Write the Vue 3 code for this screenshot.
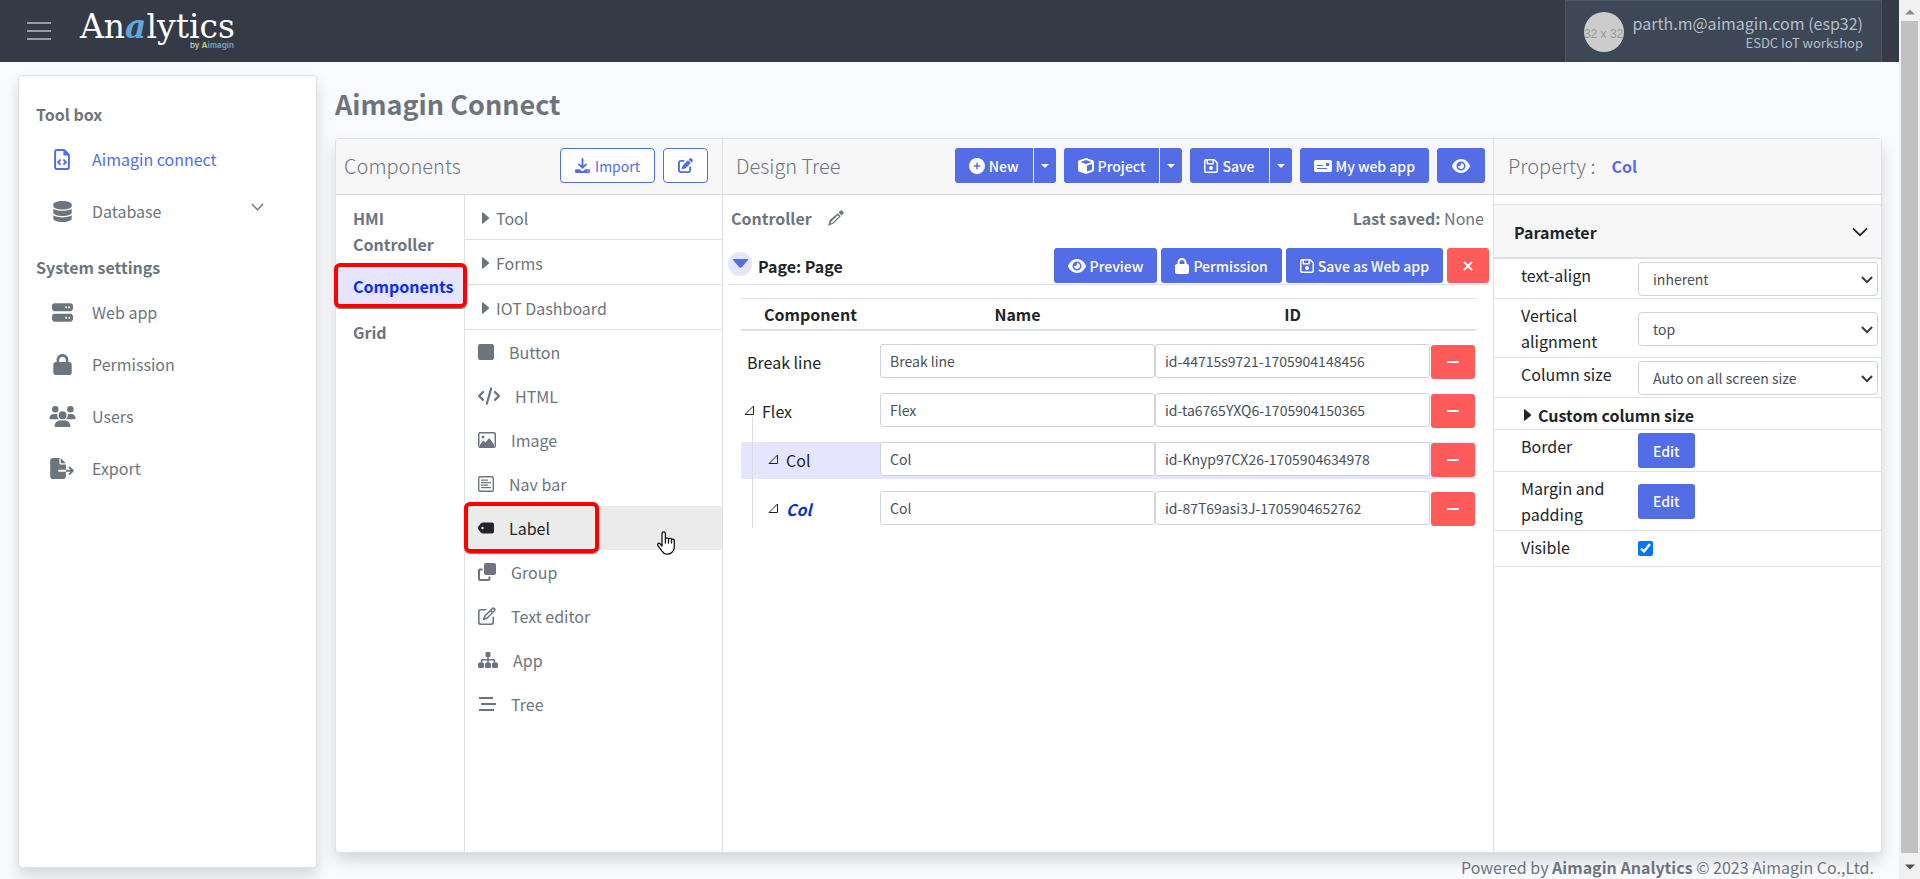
<script setup>
import { ref, h } from 'vue'

const pen = 'M471.6 21.7c-21.9-21.9-57.3-21.9-79.2 0L362.3 51.7l97.9 97.9 30.1-30.1c21.9-21.9 21.9-57.3 0-79.2L471.6 21.7zm-299.2 220c-6.1 6.1-10.8 13.6-13.5 21.9l-29.6 88.8c-2.9 8.6-.6 18.1 5.8 24.6s15.9 8.7 24.6 5.8l88.8-29.6c8.2-2.7 15.7-7.4 21.9-13.5L437.7 172.3 339.7 74.3 172.4 241.7z'

const icons = {
  fileCode: [384, 512, 'M64 464c-8.8 0-16-7.2-16-16V64c0-8.8 7.2-16 16-16H224v80c0 17.7 14.3 32 32 32h80V448c0 8.8-7.2 16-16 16H64zM64 0C28.7 0 0 28.7 0 64V448c0 35.3 28.7 64 64 64H320c35.3 0 64-28.7 64-64V154.5c0-17-6.7-33.3-18.7-45.3L274.7 18.7C262.7 6.7 246.5 0 229.5 0H64zm97 289c9.4-9.4 9.4-24.6 0-33.9s-24.6-9.4-33.9 0L79 303c-9.4 9.4-9.4 24.6 0 33.9l48 48c9.4 9.4 24.6 9.4 33.9 0s9.4-24.6 0-33.9l-31-31 31-31zM257 255c-9.4-9.4-24.6-9.4-33.9 0s-9.4 24.6 0 33.9l31 31-31 31c-9.4 9.4-9.4 24.6 0 33.9s24.6 9.4 33.9 0l48-48c9.4-9.4 9.4-24.6 0-33.9l-48-48z'],
  database: [448, 512, 'M448 80v48c0 44.2-100.3 80-224 80S0 172.2 0 128V80C0 35.8 100.3 0 224 0S448 35.8 448 80zM393.2 214.7c20.8-7.4 39.9-16.9 54.8-28.6V288c0 44.2-100.3 80-224 80S0 332.2 0 288V186.1c14.9 11.8 34 21.2 54.8 28.6C99.7 230.7 159.5 240 224 240s124.3-9.3 169.2-25.3zM0 346.1c14.9 11.8 34 21.2 54.8 28.6C99.7 390.7 159.5 400 224 400s124.3-9.3 169.2-25.3c20.8-7.4 39.9-16.9 54.8-28.6V432c0 44.2-100.3 80-224 80S0 476.2 0 432V346.1z'],
  server: [512, 512, 'M64 32C28.7 32 0 60.7 0 96v64c0 35.3 28.7 64 64 64H448c35.3 0 64-28.7 64-64V96c0-35.3-28.7-64-64-64H64zm280 72a24 24 0 1 1 0 48 24 24 0 1 1 0-48zm48 24a24 24 0 1 1 48 0 24 24 0 1 1 -48 0zM64 288c-35.3 0-64 28.7-64 64v64c0 35.3 28.7 64 64 64H448c35.3 0 64-28.7 64-64V352c0-35.3-28.7-64-64-64H64zm280 72a24 24 0 1 1 0 48 24 24 0 1 1 0-48zm56 24a24 24 0 1 1 48 0 24 24 0 1 1 -48 0z'],
  lock: [448, 512, 'M144 144v48H304V144c0-44.2-35.8-80-80-80s-80 35.8-80 80zM80 192V144C80 64.5 144.5 0 224 0s144 64.5 144 144v48h16c35.3 0 64 28.7 64 64V448c0 35.3-28.7 64-64 64H64c-35.3 0-64-28.7-64-64V256c0-35.3 28.7-64 64-64H80z'],
  users: [640, 512, 'M144 0a80 80 0 1 1 0 160A80 80 0 1 1 144 0zM512 0a80 80 0 1 1 0 160A80 80 0 1 1 512 0zM0 298.7C0 239.8 47.8 192 106.7 192h42.7c15.9 0 31 3.5 44.6 9.7c-1.3 7.2-1.9 14.7-1.9 22.3c0 38.2 16.8 72.5 43.3 96c-.2 0-.4 0-.7 0H21.3C9.6 320 0 310.4 0 298.7zM405.3 320c-.2 0-.4 0-.7 0c26.6-23.5 43.3-57.8 43.3-96c0-7.6-.7-15-1.9-22.3c13.6-6.3 28.7-9.7 44.6-9.7h42.7C592.2 192 640 239.8 640 298.7c0 11.8-9.6 21.3-21.3 21.3H405.3zM224 224a96 96 0 1 1 192 0 96 96 0 1 1 -192 0zM128 485.3C128 411.7 187.7 352 261.3 352H378.7C452.3 352 512 411.7 512 485.3c0 14.7-11.9 26.7-26.7 26.7H154.7c-14.7 0-26.7-11.9-26.7-26.7z'],
  fileExport: [576, 512, 'M0 64C0 28.7 28.7 0 64 0H224V128c0 17.7 14.3 32 32 32H384V288H216c-13.3 0-24 10.7-24 24s10.7 24 24 24H384V448c0 35.3-28.7 64-64 64H64c-35.3 0-64-28.7-64-64V64zM384 336V288H494.1l-39-39c-9.4-9.4-9.4-24.6 0-33.9s24.6-9.4 33.9 0l80 80c9.4 9.4 9.4 24.6 0 33.9l-80 80c-9.4 9.4-24.6 9.4-33.9 0s-9.4-24.6 0-33.9l39-39H384zm0-208H256V0L384 128z'],
  edit: [512, 512, pen + 'M96 64C43 64 0 107 0 160V416c0 53 43 96 96 96H352c53 0 96-43 96-96V320c0-17.7-14.3-32-32-32s-32 14.3-32 32v96c0 17.7-14.3 32-32 32H96c-17.7 0-32-14.3-32-32V160c0-17.7 14.3-32 32-32h96c17.7 0 32-14.3 32-32s-14.3-32-32-32H96z'],
  download: [512, 512, 'M288 32a32 32 0 0 0-64 0V260l-65-65a32 32 0 0 0-46 46l120 120a32 32 0 0 0 46 0l120-120a32 32 0 0 0-46-46l-65 65zM40 384a40 40 0 0 0-40 40v48a40 40 0 0 0 40 40H472a40 40 0 0 0 40-40V424a40 40 0 0 0-40-40H350l-45 40a75 75 0 0 1-98 0L162 384zM440 424a24 24 0 1 1 0 48 24 24 0 1 1 0-48z'],
  plus: [512, 512, 'M256 512A256 256 0 1 0 256 0a256 256 0 1 0 0 512zM232 344V280H168c-13.3 0-24-10.7-24-24s10.7-24 24-24h64V168c0-13.3 10.7-24 24-24s24 10.7 24 24v64h64c13.3 0 24 10.7 24 24s-10.7 24-24 24H280v64c0 13.3-10.7 24-24 24s-24-10.7-24-24z'],
  cube: [512, 512, 'M234.5 5.7c13.9-5 29.1-5 43.1 0l192 68.6C495 83.4 512 107.5 512 134.6V377.4c0 27-17 51.2-42.5 60.3l-192 68.6c-13.9 5-29.1 5-43.1 0l-192-68.6C17 428.6 0 404.5 0 377.4V134.6c0-27 17-51.2 42.5-60.3l192-68.6zM256 66L82.3 128 256 190l173.7-62L256 66zm32 368.6l160-57.1v-188L288 246.6v188z'],
  save: [448, 512, 'M48 96V416c0 8.8 7.2 16 16 16H384c8.8 0 16-7.2 16-16V170.5c0-4.2-1.7-8.3-4.7-11.3l33.9-33.9c12 12 18.7 28.3 18.7 45.3V416c0 35.3-28.7 64-64 64H64c-35.3 0-64-28.7-64-64V96C0 60.7 28.7 32 64 32H309.5c17 0 33.3 6.7 45.3 18.7l74.5 74.5-33.9 33.9L320.8 84.7c-.3-.3-.5-.5-.8-.8V184c0 13.3-10.7 24-24 24H104c-13.3 0-24-10.7-24-24V80H64c-8.8 0-16 7.2-16 16zm80-16v80H272V80H128zm32 240a64 64 0 1 1 128 0 64 64 0 1 1 -128 0z'],
  eye: [576, 512, 'M288 32c-80.8 0-145.5 36.8-192.6 80.6C48.6 156 17.3 208 2.5 243.7c-3.3 7.9-3.3 16.7 0 24.6C17.3 304 48.6 356 95.4 399.4C142.5 443.2 207.2 480 288 480s145.5-36.8 192.6-80.6c46.8-43.5 78.1-95.4 93-131.1c3.3-7.9 3.3-16.7 0-24.6c-14.9-35.7-46.2-87.7-93-131.1C433.5 68.8 368.8 32 288 32zM144 256a144 144 0 1 1 288 0 144 144 0 1 1 -288 0zm144-64c0 35.3-28.7 64-64 64c-7.1 0-13.9-1.2-20.3-3.3c-5.5-1.8-11.9 1.6-11.7 7.4c.3 6.9 1.3 13.8 3.2 20.7c13.7 51.2 66.4 81.6 117.6 67.9s81.6-66.4 67.9-117.6c-11.1-41.5-47.8-69.4-88.6-71.1c-5.8-.2-9.2 6.1-7.4 11.7c2.1 6.4 3.3 13.2 3.3 20.3z'],
  card: [18, 14, 'M2 1h14a2 2 0 0 1 2 2v8a2 2 0 0 1-2 2H2a2 2 0 0 1-2-2V3a2 2 0 0 1 2-2zM3 6v1h6V6zM3 9v1h10V9zM12 4v3h3V4z'],
  close: [12, 12, 'M2.6 1.2 6 4.6 9.4 1.2 10.8 2.6 7.4 6l3.4 3.4-1.4 1.4L6 7.4 2.6 10.8 1.2 9.4 4.6 6 1.2 2.6z'],
  square: [16, 16, 'M2 0h12a2 2 0 0 1 2 2v12a2 2 0 0 1-2 2H2a2 2 0 0 1-2-2V2a2 2 0 0 1 2-2z'],
  code: [640, 512, 'M392.8 1.2c-17-4.9-34.7 5-39.6 22l-128 448c-4.9 17 5 34.7 22 39.6s34.7-5 39.6-22l128-448c4.9-17-5-34.7-22-39.6zm80.6 120.1c-12.5 12.5-12.5 32.8 0 45.3L562.7 256l-89.4 89.4c-12.5 12.5-12.5 32.8 0 45.3s32.8 12.5 45.3 0l112-112c12.5-12.5 12.5-32.8 0-45.3l-112-112c-12.5-12.5-32.8-12.5-45.3 0zm-306.7 0c-12.5-12.5-32.8-12.5-45.3 0l-112 112c-12.5 12.5-12.5 32.8 0 45.3l112 112c12.5 12.5 32.8 12.5 45.3 0s12.5-32.8 0-45.3L77.3 256l89.4-89.4c12.5-12.5 12.5-32.8 0-45.3z'],
  image: [18, 16, 'M2 0h14a2 2 0 0 1 2 2v12a2 2 0 0 1-2 2H2a2 2 0 0 1-2-2V2a2 2 0 0 1 2-2zM2 1.5a.5.5 0 0 0-.5.5v12a.5.5 0 0 0 .5.5h14a.5.5 0 0 0 .5-.5V2a.5.5 0 0 0-.5-.5zM5 3.6a1.5 1.5 0 1 1 0 3 1.5 1.5 0 1 1 0-3zM2 14.5v-2l3-3.6q.5-.5 1 0l1.4 1.6L10.7 6.4q.5-.5 1 0L16 12.5v2z'],
  nav: [16, 16, 'M2 0h12a2 2 0 0 1 2 2v12a2 2 0 0 1-2 2H2a2 2 0 0 1-2-2V2a2 2 0 0 1 2-2zM2 1.4a.6.6 0 0 0-.6.6v12a.6.6 0 0 0 .6.6h12a.6.6 0 0 0 .6-.6V2a.6.6 0 0 0-.6-.6zM3 3.5h7v1.2H3zM3 6h10v1.2H3zM3 8.500h7v1.200H3zM3 11h10v1.200H3z'],
  tag: [16, 12, 'M5 .5h9a2 2 0 0 1 2 2v7a2 2 0 0 1-2 2H5Q3.6 11.5 2.6 10.3L.3 7.2Q-.5 6 .3 4.8L2.6 1.7Q3.6.5 5 .5zM4.5 4.8a1.2 1.2 0 1 0 0 2.4 1.2 1.2 0 0 0 0-2.4z'],
  clone: [18, 18, 'M8 0h8a2 2 0 0 1 2 2v8a2 2 0 0 1-2 2H8a2 2 0 0 1-2-2V2a2 2 0 0 1 2-2zM2 5.500h2.500v2H2.500a.5.5 0 0 0-.5.5V15.500a.5.5 0 0 0 .5.5h7.500a.5.5 0 0 0 .5-.5v-2h2V16a2 2 0 0 1-2 2H2a2 2 0 0 1-2-2V7.500a2 2 0 0 1 2-2z'],
  compose: [18, 18, 'M2.5 2H9l-1.4 1.6H3Q1.6 3.6 1.6 5v10Q1.6 16.4 3 16.4h10q1.4 0 1.4-1.4v-4.5L16 9v6.5q0 2.5-2.5 2.5h-11Q0 18 0 15.5v-11Q0 2 2.5 2zM14 .8q1.2-1.2 2.4 0l.8.8q1.2 1.2 0 2.4l-7.5 7.500q-.5.5-1.200.7l-2.500.8q-1.200.2-1-1l.8-2.500q.2-.7.7-1.200zM12.500 4.500l-4.800 4.800-.8 1.800 1.800-.7 5-5zM15 1.900l-1.300 1.400 1.100 1.200 1.400-1.400z'],
  sitemap: [20, 16, 'M8.5 0h3a1 1 0 0 1 1 1v3a1 1 0 0 1-1 1h-.7v2h5.2a1.2 1.2 0 0 1 1.2 1.2V10.5h1.3a1.5 1.5 0 0 1 1.5 1.5v2.5a1.5 1.5 0 0 1-1.5 1.5h-3a1.5 1.5 0 0 1-1.5-1.5V12a1.5 1.5 0 0 1 1.5-1.5V8.5h-4.7v2h.7a1.5 1.5 0 0 1 1.5 1.5v2.5a1.5 1.5 0 0 1-1.5 1.5h-3A1.5 1.5 0 0 1 7 14.5V12a1.5 1.5 0 0 1 1.5-1.5h.7v-2H4.5v2a1.5 1.5 0 0 1 1.5 1.5v2.5A1.5 1.5 0 0 1 4.5 16h-3A1.5 1.5 0 0 1 0 14.5V12a1.5 1.5 0 0 1 1.5-1.5h1.3V8.2A1.2 1.2 0 0 1 4 7h5.200V5h-.7a1 1 0 0 1-1-1V1a1 1 0 0 1 1-1z'],
  bars: [18, 16, 'M1 1h14v2H1zM3 7h15v2H3zM1 13h15v2H1z'],
  pencil: [16, 16, 'M12.2.8q1-1 2 0l1 1q1 1 0 2l-1.600 1.600-3-3zM9.800 3.200l3 3L5.500 13.600 0 16l1.800-6zM9.800 5.200 3.300 11.500l-.7 1.900L4.500 12.700l6.500-6.300z'],
  chevron: [14, 9, 'M1.2.6.1 1.7 7 8.6l6.9-6.9L12.8.6 7 6.4z'],
  chevronBold: [12, 8, 'M1.600.3.2 1.700 6 7.500l5.800-5.800L10.400.3 6 4.700z'],
  caretRight: [7, 12, 'M0 .5V11.5L.8 11.8 7 6.5V5.5L.8.2z'],
  caretDown: [8, 4, 'M0 0h8L4 4z'],
  caretWide: [15, 9, 'M0 0h15v1L8.5 8.5h-2L0 1z']
}

const Icon = (p) => {
  const [w, ht, d] = icons[p.name]
  return h('svg', { viewBox: `0 0 ${w} ${ht}`, width: p.w, height: p.h, 'aria-hidden': 'true', style: { flex: 'none', display: 'block' } },
    [h('path', { d, fill: 'currentColor', 'fill-rule': 'evenodd' })])
}
Icon.props = ['name', 'w', 'h']

const toolbox = [
  { icon: 'fileCode', w: 16, h: 21, text: 'Aimagin connect', active: true },
  { icon: 'database', w: 19, h: 21, text: 'Database', more: true }
]
const settings = [
  { icon: 'server', w: 21, h: 21, text: 'Web app' },
  { icon: 'lock', w: 19, h: 21, text: 'Permission' },
  { icon: 'users', w: 27, h: 21, text: 'Users' },
  { icon: 'fileExport', w: 24, h: 21, text: 'Export' }
]
const groups = ['Tool', 'Forms', 'IOT Dashboard']
const parts = [
  { icon: 'square', w: 16, h: 16, text: 'Button' },
  { icon: 'code', w: 22, h: 18, text: 'HTML' },
  { icon: 'image', w: 18, h: 16, text: 'Image' },
  { icon: 'nav', w: 16, h: 16, text: 'Nav bar' },
  { icon: 'tag', w: 16, h: 12, text: 'Label', hover: true },
  { icon: 'clone', w: 18, h: 18, text: 'Group' },
  { icon: 'compose', w: 18, h: 18, text: 'Text editor' },
  { icon: 'sitemap', w: 20, h: 16, text: 'App' },
  { icon: 'bars', w: 18, h: 16, text: 'Tree' }
]
const nodes = ref([
  { label: 'Break line', name: 'Break line', id: 'id-44715s9721-1705904148456', level: 0 },
  { label: 'Flex', name: 'Flex', id: 'id-ta6765YXQ6-1705904150365', level: 1, guide: true },
  { label: 'Col', name: 'Col', id: 'id-Knyp97CX26-1705904634978', level: 2, marked: true },
  { label: 'Col', name: 'Col', id: 'id-87T69asi3J-1705904652762', level: 2, current: true }
])
const visible = ref(true)
</script>

<template>
  <div class="window">
    <div class="page">
      <header class="topbar">
        <button class="menu" aria-label="Menu"><i></i><i></i><i></i></button>
        <a class="logo" href="#">
          <span class="word">An<b>a</b>lytics</span>
          <span class="by">by <em>A</em><strong>imagin</strong></span>
        </a>
        <div class="user">
          <span class="avatar">32 x 32</span>
          <div class="who"><span>parth.m@aimagin.com (esp32)</span><small>ESDC IoT workshop</small></div>
        </div>
      </header>

      <div class="body">
        <nav class="sidebar">
          <h2>Tool box</h2>
          <a v-for="i in toolbox" :key="i.text" href="#" :class="{ active: i.active }">
            <span class="ico"><Icon :name="i.icon" :w="i.w" :h="i.h" /></span>{{ i.text }}
            <span v-if="i.more" class="more"><Icon name="chevron" :w="13" :h="8" /></span>
          </a>
          <h2>System settings</h2>
          <a v-for="i in settings" :key="i.text" href="#">
            <span class="ico"><Icon :name="i.icon" :w="i.w" :h="i.h" /></span>{{ i.text }}
          </a>
        </nav>

        <main>
          <h1>Aimagin Connect</h1>
          <div class="card">
            <section class="components">
              <div class="head">
                <h3>Components</h3>
                <button class="btn outline"><Icon name="download" :w="15" :h="15" />Import</button>
                <button class="btn outline" aria-label="Edit"><Icon name="edit" :w="15" :h="15" /></button>
              </div>
              <div class="split">
                <div class="tabs">
                  <button>HMI Controller</button>
                  <button class="on">Components<span class="mark"></span></button>
                  <button>Grid</button>
                </div>
                <div class="list">
                  <button v-for="g in groups" :key="g" class="group"><Icon name="caretRight" :w="7" :h="12" />{{ g }}</button>
                  <button v-for="p in parts" :key="p.text" class="part" :class="{ hover: p.hover }">
                    <Icon :name="p.icon" :w="p.w" :h="p.h" />{{ p.text }}
                    <template v-if="p.hover">
                      <span class="mark"></span>
                      <svg class="cursor" width="18" height="24" viewBox="0 0 18 24">
                        <path d="M5 13V2.500a1.700 1.700 0 0 1 3.400 0V8a1.700 1.700 0 0 1 3.200 0 1.700 1.700 0 0 1 3 .7 1.500 1.500 0 0 1 2.700 1V16q0 3-2 5-2 2.200-4.600 2.200H9.600Q7 23.200 5.400 20.600L1 14.700q-.9-2 .8-2.500 1-.1 3.200 3zM8.400 8v4M11.500 8.500V12M14.500 9.300V12" fill="#fff" stroke="#111" stroke-width="1.300" stroke-linejoin="round" stroke-linecap="round" />
                      </svg>
                    </template>
                  </button>
                </div>
              </div>
            </section>

            <section class="design">
              <div class="head">
                <h3>Design Tree</h3>
                <div class="pair"><button class="btn"><Icon name="plus" :w="16" :h="16" />New</button><button class="btn drop" aria-label="More"><Icon name="caretDown" :w="8" :h="4" /></button></div>
                <div class="pair"><button class="btn"><Icon name="cube" :w="16" :h="16" />Project</button><button class="btn drop" aria-label="More"><Icon name="caretDown" :w="8" :h="4" /></button></div>
                <div class="pair"><button class="btn"><Icon name="save" :w="14" :h="16" />Save</button><button class="btn drop" aria-label="More"><Icon name="caretDown" :w="8" :h="4" /></button></div>
                <button class="btn"><Icon name="card" :w="18" :h="14" />My web app</button>
                <button class="btn solo" aria-label="View"><Icon name="eye" :w="18" :h="16" /></button>
              </div>
              <div class="status">
                <b>Controller</b><Icon name="pencil" :w="16" :h="16" />
                <span><b>Last saved:</b> None</span>
              </div>
              <div class="pagebar">
                <button class="toggle" aria-label="Collapse page"><Icon name="caretWide" :w="15" :h="9" /></button>
                <b>Page: Page</b>
                <button class="btn"><Icon name="eye" :w="18" :h="16" />Preview</button>
                <button class="btn"><Icon name="lock" :w="14" :h="16" />Permission</button>
                <button class="btn"><Icon name="save" :w="14" :h="16" />Save as Web app</button>
                <button class="btn red solo" aria-label="Delete page"><Icon name="close" :w="12" :h="12" /></button>
              </div>
              <table>
                <colgroup><col class="c1"><col><col><col class="c4"></colgroup>
                <thead><tr><th>Component</th><th>Name</th><th>ID</th><th></th></tr></thead>
                <tbody>
                  <tr v-for="n in nodes" :key="n.id" :class="{ marked: n.marked }">
                    <td :class="'lv' + n.level">
                      <span v-if="n.guide" class="guide"></span>
                      <span class="node">
                        <svg v-if="n.level" width="11" height="11" viewBox="0 0 11 11"><path d="M1 9.500H9.500V1z" fill="none" stroke="#222" /></svg>
                        <span :class="{ current: n.current }">{{ n.label }}</span>
                      </span>
                    </td>
                    <td><input v-model="n.name" type="text" aria-label="Name"></td>
                    <td><input v-model="n.id" type="text" aria-label="ID"></td>
                    <td><button class="btn red remove" aria-label="Remove"><i></i></button></td>
                  </tr>
                </tbody>
              </table>
            </section>

            <section class="property">
              <div class="head"><h3>Property :</h3><b>Col</b></div>
              <button class="param">Parameter<Icon name="chevron" :w="16" :h="10" /></button>
              <div class="row"><label for="align">text-align</label><span class="select"><select id="align"><option>inherent</option></select><Icon name="chevronBold" :w="12" :h="8" /></span></div>
              <div class="row"><label for="valign">Vertical alignment</label><span class="select"><select id="valign"><option>top</option></select><Icon name="chevronBold" :w="12" :h="8" /></span></div>
              <div class="row"><label for="size">Column size</label><span class="select"><select id="size"><option>Auto on all screen size</option></select><Icon name="chevronBold" :w="12" :h="8" /></span></div>
              <button class="custom"><Icon name="caretRight" :w="7" :h="12" />Custom column size</button>
              <div class="row"><label for="border">Border</label><button id="border" class="btn">Edit</button></div>
              <div class="row"><label for="margin">Margin and padding</label><button id="margin" class="btn">Edit</button></div>
              <div class="row"><label for="visible">Visible</label><input id="visible" v-model="visible" type="checkbox"></div>
            </section>
          </div>
          <footer>Powered by <b>Aimagin Analytics</b> © 2023 Aimagin Co.,Ltd.</footer>
        </main>
      </div>
    </div>
    <div class="scroll" aria-hidden="true">
      <svg width="10" height="6" viewBox="0 0 10 6"><path d="M0 5.500H10L5 .5z" fill="#8b8b8b" /></svg>
      <div></div>
      <svg width="10" height="6" viewBox="0 0 10 6"><path d="M0 .5H10L5 5.500z" fill="#505050" /></svg>
    </div>
  </div>
</template>

<style>
body { margin: 0; background: #fafbff; }
</style>

<style scoped>
* { box-sizing: border-box; }
.window { display: flex; min-height: 100vh; font: 400 16px/26px "Noto Sans CJK JP", "Noto Sans", sans-serif; color: #6c757d; }
button, input, select { font: inherit; color: inherit; margin: 0; }
button { border: 0; background: none; padding: 0; text-align: left; cursor: pointer; }
a { color: inherit; text-decoration: none; }
h1, h2, h3 { margin: 0; }
.page { flex: 1; min-width: 0; display: flex; flex-direction: column; overflow: hidden; }
.topbar { height: 62px; background: #343a46; display: flex; align-items: center; padding: 0 17px 0 27px; }
.menu { width: 24px; display: grid; gap: 6px; }
.menu i { height: 2px; background: #9a9da2; }
.logo { position: relative; margin-left: 29px; color: #fff; font: 400 33px/40px "DejaVu Serif", serif; height: 48px; }
.word b { font: italic 700 33px/40px "DejaVu Serif", serif; color: #5da7dc; }
.by { position: absolute; right: 1px; bottom: 5px; font: 500 8px/10px Inter, sans-serif; color: #c9cdd3; }
.by em { font-style: normal; font-weight: 700; color: #b5cf5a; }
.by strong { color: #6f9bd0; }
.user { margin-left: auto; align-self: stretch; display: flex; align-items: center; gap: 9px; padding: 0 18px; background: #3e4755; border: 1px solid #48566a; border-width: 1px 1px 0; color: #b4bfcb; }
.avatar { width: 40px; height: 40px; border-radius: 50%; background: #ccc; color: #999; font: 12px/44px "Liberation Sans", sans-serif; text-align: center; overflow: hidden; white-space: nowrap; }
.who { display: flex; flex-direction: column; align-items: flex-end; font-size: 16px; line-height: 22px; }
.who small { font-size: 13px; line-height: 17px; }
.body { flex: 1; display: flex; gap: 18px; padding: 0 17px 0 18px; }
.sidebar { width: 299px; flex: none; margin: 13px 0 11px; padding: 25px 17px; background: #fff; border: 1px solid #dfe1e6; border-radius: 4px; box-shadow: 0 8px 16px rgba(0, 0, 0, .15); }
.sidebar h2 { font-size: 16px; line-height: 26px; margin-bottom: 6px; }
.sidebar a { display: flex; align-items: center; height: 52px; padding-left: 11px; }
.sidebar a + h2 { margin: 17px 0 6px; }
.sidebar .active { color: #536de6; }
.ico { width: 30px; margin-right: 15px; display: grid; place-items: center; }
.more { margin-left: auto; padding: 0 35px 8px 0; }
main { flex: 1; min-width: 0; display: flex; flex-direction: column; }
h1 { font-size: 27px; line-height: 40px; padding: 22px 0 14px; }
.card { flex: 1; display: grid; grid-template-columns: 386fr 771fr 388fr; background: #fff; border: 1px solid #dee2e6; border-radius: 4px; box-shadow: 0 8px 16px rgba(0, 0, 0, .15); }
.card > section { min-width: 0; display: flex; flex-direction: column; }
.card > section + section { border-left: 1px solid #dee2e6; }
.head { height: 56px; flex: none; display: flex; align-items: center; gap: 8px; padding: 0 8px 2px; background: #f7f7f7; border-bottom: 1px solid #d9dbdd; }
h3 { font-size: 20px; line-height: 26px; font-weight: 300; margin-right: auto; }
.btn { height: 35px; display: inline-flex; align-items: center; justify-content: center; gap: 4px; padding: 0 14px; border-radius: 3px; background: #536de6; color: #fff; font-size: 14px; line-height: 20px; font-weight: 500; white-space: nowrap; }
.solo { padding: 0 15px; }
.outline { background: #fff; border: 1px solid #536de6; color: #536de6; padding: 0 14px; gap: 5px; border-radius: 4px; font-weight: 400; }
.red { background: #ff5b5b; }
.components .head { padding-right: 14px; }
.pair { display: flex; gap: 1px; }
.pair .btn:first-child { border-radius: 3px 0 0 3px; }
.pair .drop { width: 22px; padding: 0; border-radius: 0 3px 3px 0; }
.split { flex: 1; display: grid; grid-template-columns: 129px 1fr; }
.tabs { border-right: 1px solid #dee2e6; font-weight: 700; }
.tabs button { position: relative; display: block; width: 100%; padding: 6px 18px 6px 17px; font-weight: 700; }
.tabs button:first-child { padding-top: 10px; padding-bottom: 10px; }
.tabs .on { background: #e5e5ff; color: #0b2bff; }
.tabs button:last-child { padding-top: 14px; }
.mark { position: absolute; inset: -4px -3px -3px -2px; border: 4px solid #fe0000; border-radius: 6px; box-shadow: 0 1px 1px #777; z-index: 2; }
.list button { display: flex; align-items: center; width: 100%; color: #6c757d; font-weight: 400; }
.list .group { height: 45px; padding: 2px 0 0 17px; gap: 7px; border-bottom: 1px solid #dee2e6; }
.list .part { position: relative; height: 44px; padding-left: 13px; gap: 15px; }
.list .hover { background: #ebebeb; color: #212529; }
.part .mark { inset: -4px auto -3px -1px; width: 135px; }
.cursor { position: absolute; left: 192px; top: 25px; z-index: 3; }
.design .head { padding-left: 13px; }
.status { display: flex; align-items: center; padding: 10px 9px 0 8px; }
.status > svg { margin-left: 16px; }
.status > span { margin-left: auto; }
.pagebar { display: flex; align-items: center; gap: 4px; margin: 17px 4px 0 5px; border-bottom: 1px solid #dee2e6; padding-bottom: 1px; color: #212529; }
.toggle { width: 24px; height: 24px; border-radius: 50%; background: #e5e5ff; color: #536de6; display: grid; place-items: center; margin-bottom: 4px; }
.pagebar b { margin-right: auto; padding-left: 2px; }
table { margin: 13px 17px 0 18px; border-collapse: separate; border-spacing: 0; table-layout: fixed; border-top: 1px solid #dee2e6; color: #212529; }
.c1 { width: 139px; }
.c4 { width: 46px; }
th { height: 32px; padding: 0; border-bottom: 2px solid #dee2e6; text-align: center; line-height: 26px; }
tbody::before { content: ""; display: block; height: 13px; }
td { position: relative; height: 49px; padding: 0; border-bottom: 12px solid transparent; background-clip: padding-box; vertical-align: top; }
.marked td { background-color: #e5e5ff; }
.node { display: flex; align-items: center; gap: 7px; height: 35px; padding-left: 6px; }
.lv1 .node { padding-left: 3px; }
.lv2 .node { padding-left: 27px; }
.current { color: #0a32c8; font-weight: 700; font-style: italic; }
.guide { position: absolute; left: 11px; top: 24px; width: 1px; height: 111px; background: #d9dce2; z-index: 1; }
td input { display: block; width: 100%; height: 34px; padding: 0 9px; border: 1px solid #ced4da; border-radius: 3px; background: #fff; color: #495057; font-size: 14px; }
.remove { width: 44px; height: 34px; padding: 0; margin: 1px 0 0 1px; }
.remove i { width: 12px; height: 2px; border-radius: 1px; background: #fff; }
td .btn { display: flex; }
.property { color: #212529; }
.property .head { padding-left: 14px; color: #6c757d; }
.property h3 { margin-right: 8px; }
.property .head b { color: #536de6; }
.param { display: flex; align-items: center; justify-content: space-between; height: 55px; flex: none; margin-top: 9px; padding: 1px 13px 0 20px; background: #f7f7f7; border-top: 1px solid #dee2e6; border-bottom: 2px solid #dee2e6; font-weight: 700; }
.row { display: grid; grid-template-columns: 117px 1fr; align-items: center; justify-items: start; padding: 0 3px 0 27px; min-height: 36px; border-bottom: 1px solid #dee2e6; }
.row label { align-self: start; padding: 3px 0; }
.row .btn { margin: 3px 0; padding: 0 15px; }
.row input { width: 15px; height: 15px; accent-color: #0075ff; }
.select { position: relative; width: 100%; margin: 3px 0 2px; color: #343a40; }
.select select { display: block; width: 100%; height: 34px; padding: 0 14px; appearance: none; border: 1px solid #ced4da; border-radius: 4px; background: #fff; color: #495057; font-size: 14px; }
.select svg { position: absolute; right: 5px; top: 14px; pointer-events: none; }
.custom { display: flex; align-items: center; gap: 7px; padding: 4px 0 1px 30px; border-bottom: 1px solid #dee2e6; font-weight: 700; }
footer { height: 26px; text-align: right; padding-right: 8px; line-height: 28px; }
.scroll { width: 21px; flex: none; background: #f1f1f1; display: flex; flex-direction: column; align-items: center; justify-content: space-between; padding: 9px 0; }
.scroll div { width: 17px; flex: 1; margin: 6px 0 11px; background: #c1c1c1; }
</style>
